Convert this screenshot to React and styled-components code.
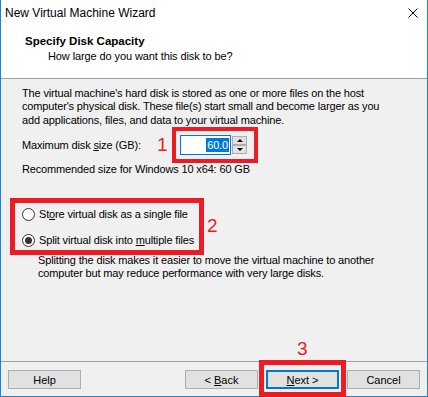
import React from "react";
import styled, { createGlobalStyle } from "styled-components";

const GlobalStyle = createGlobalStyle`
  body {
    margin: 0;
    background: #ffffff;
    font-family: "Liberation Sans", Arial, sans-serif;
  }
`;

const Window = styled.div`
  position: relative;
  width: 428px;
  height: 397px;
  box-sizing: border-box;
  border: 1px solid #1883d7;
  border-top: none;
  display: flex;
  flex-direction: column;
  background: #ffffff;
  color: #000000;
`;

const TitleBar = styled.div`
  height: 26px;
  display: flex;
  align-items: center;
  justify-content: space-between;
  padding: 0 9px 0 4px;
  font-size: 12px;
`;

const CloseIcon = styled.svg`
  width: 10px;
  height: 10px;
`;

const Header = styled.div`
  height: 53px;
  box-sizing: border-box;
  border-bottom: 1px solid #a0a0a0;
  padding: 8px 0 0 24px;
`;

const Heading = styled.div`
  font-size: 11.5px;
  font-weight: bold;
  line-height: 14px;
`;

const SubHeading = styled.div`
  margin: 1px 0 0 23px;
  font-size: 11px;
  line-height: 14px;
  letter-spacing: -0.1px;
`;

const Body = styled.div`
  flex: 1;
  background: #f0f0f0;
  padding: 8px 0 0 21px;
  font-size: 11px;
  letter-spacing: -0.15px;
`;

const Text = styled.p`
  margin: ${(p) => p.$top || 0}px 0 0 ${(p) => p.$indent || 0}px;
  line-height: 13.3px;
`;

const SizeRow = styled.div`
  display: flex;
  align-items: center;
  height: 20px;
  margin-top: 8px;
`;

const SizeLabel = styled.span`
  width: 158px;
`;

const NumberBox = styled.div`
  width: 51px;
  height: 20px;
  box-sizing: border-box;
  border: 1px solid #0078d7;
  background: #ffffff;
  display: flex;
  align-items: center;
  justify-content: flex-end;
  padding-right: 1px;
`;

const Selected = styled.span`
  background: #0078d7;
  color: #ffffff;
  line-height: 14px;
  padding: 0 1px;
`;

const Spinner = styled.div`
  display: flex;
  flex-direction: column;
  margin-left: 1px;
  height: 18px;
`;

const SpinButton = styled.div`
  width: 15px;
  height: 9px;
  box-sizing: border-box;
  border: 1px solid #adadad;
  background: #e1e1e1;
  display: flex;
  align-items: center;
  justify-content: center;

  &::after {
    content: "";
    border-left: 3px solid transparent;
    border-right: 3px solid transparent;
    ${(p) =>
      p.$down ? "border-top: 3px solid #000;" : "border-bottom: 3px solid #000;"}
  }
`;

const RadioGroup = styled.div`
  display: flex;
  flex-direction: column;
  gap: 10px;
  margin-top: 30px;
`;

const RadioRow = styled.label`
  display: flex;
  align-items: center;
  gap: 4px;
  height: 16px;
`;

const RadioCircle = styled.span`
  width: 13px;
  height: 13px;
  box-sizing: border-box;
  border: 1px solid #333333;
  border-radius: 50%;
  background: #ffffff;
  display: flex;
  align-items: center;
  justify-content: center;

  &::after {
    content: "";
    width: 7px;
    height: 7px;
    border-radius: 50%;
    background: ${(p) => (p.$checked ? "#333333" : "transparent")};
  }
`;

const Footer = styled.div`
  border-top: 1px solid #a0a0a0;
  background: #f0f0f0;
  padding: 8px 7px 7px;
  display: flex;
  gap: 8px;
`;

const Button = styled.div`
  width: 73px;
  height: 19px;
  box-sizing: border-box;
  border: ${(p) => (p.$focused ? "2px solid #0078d7" : "1px solid #adadad")};
  background: #e1e1e1;
  font-size: 11px;
  display: flex;
  align-items: center;
  justify-content: center;
  margin-right: ${(p) => (p.$push ? "auto" : "0")};
`;

const Mark = styled.div`
  position: absolute;
  box-sizing: border-box;
  border: ${(p) => p.$w}px solid #ed1c24;
`;

const Digit = styled.span`
  position: absolute;
  font-size: 19px;
  line-height: 19px;
  color: #ed1c24;
`;

export default function App() {
  return (
    <>
      <GlobalStyle />
      <Window>
        <TitleBar>
          <span>New Virtual Machine Wizard</span>
          <CloseIcon viewBox="0 0 10 10">
            <path d="M0.5 0.5 L9.5 9.5 M9.5 0.5 L0.5 9.5" stroke="#000" strokeWidth="1" />
          </CloseIcon>
        </TitleBar>

        <Header>
          <Heading>Specify Disk Capacity</Heading>
          <SubHeading>How large do you want this disk to be?</SubHeading>
        </Header>

        <Body>
          <Text>
            The virtual machine's hard disk is stored as one or more files on the host
            <br />
            computer's physical disk. These file(s) start small and become larger as you
            <br />
            add applications, files, and data to your virtual machine.
          </Text>

          <SizeRow>
            <SizeLabel>
              Maximum disk <u>s</u>ize (GB):
            </SizeLabel>
            <NumberBox>
              <Selected>60.0</Selected>
            </NumberBox>
            <Spinner>
              <SpinButton />
              <SpinButton $down />
            </Spinner>
          </SizeRow>

          <Text $top={8}>Recommended size for Windows 10 x64: 60 GB</Text>

          <RadioGroup>
            <RadioRow>
              <RadioCircle />
              <span>
                St<u>o</u>re virtual disk as a single file
              </span>
            </RadioRow>
            <RadioRow>
              <RadioCircle $checked />
              <span>
                Split virtual disk into <u>m</u>ultiple files
              </span>
            </RadioRow>
          </RadioGroup>

          <Text $top={6} $indent={16}>
            Splitting the disk makes it easier to move the virtual machine to another
            <br />
            computer but may reduce performance with very large disks.
          </Text>
        </Body>

        <Footer>
          <Button $push>Help</Button>
          <Button>
            &lt;&nbsp;<u>B</u>ack
          </Button>
          <Button $focused>
            <u>N</u>ext&nbsp;&gt;
          </Button>
          <Button>Cancel</Button>
        </Footer>

        <Mark $w={4} style={{ left: 171, top: 127, width: 86, height: 36 }} />
        <Mark $w={5} style={{ left: 9, top: 198, width: 194, height: 57 }} />
        <Mark $w={5} style={{ left: 258, top: 360, width: 87, height: 37 }} />
        <Digit style={{ left: 156, top: 135 }}>1</Digit>
        <Digit style={{ left: 206, top: 216 }}>2</Digit>
        <Digit style={{ left: 296, top: 339 }}>3</Digit>
      </Window>
    </>
  );
}
